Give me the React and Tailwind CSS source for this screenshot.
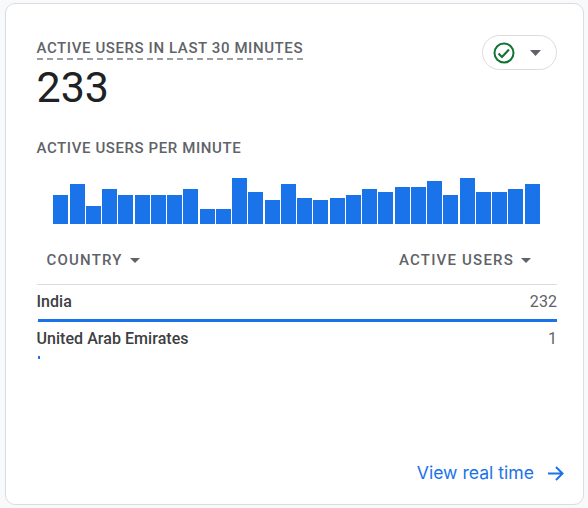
const BARS = [29, 40, 18, 35, 29, 29, 29, 29, 35, 15, 15, 46, 32, 24, 40, 26, 24, 26, 29, 35, 32, 37, 37, 43, 29, 46, 32, 32, 35, 40];

function Caret({ w = 10, h = 5 }) {
  return (
    <svg width={w} height={h} viewBox="0 0 10 5" preserveAspectRatio="none">
      <path d="M0 0h10L5 5z" fill="#5f6368" />
    </svg>
  );
}

export default function App() {
  return (
    <div className="w-[588px] h-[508px] bg-[#f8f9fa] pl-[5px] pr-[4px] pt-[3px] pb-[3px] font-['Roboto',sans-serif]">
      <div className="w-full h-full flex flex-col bg-white border border-[#dadce0] rounded-[10px] pl-[30.5px] pr-[26px] pt-[34px]">
        <div className="flex justify-between items-start">
          <div className="flex flex-col items-start">
            <div className="text-[15px] leading-[20px] font-medium tracking-[0.6px] text-[#5f6368] border-b-2 border-dashed border-[#9aa0a6]">
              ACTIVE USERS IN LAST 30 MINUTES
            </div>
            <div className="text-[43px] leading-[52px] text-[#202124] mt-[1px]">233</div>
          </div>
          <div className="flex items-center w-[75px] h-[35px] border border-[#dadce0] rounded-full pl-[10px] gap-[15px] mt-[-3px]">
            <svg width="22" height="22" viewBox="0 0 22 22">
              <circle cx="11" cy="11" r="9.5" fill="none" stroke="#137333" strokeWidth="2" />
              <path d="M5.5 11.5l3.5 3.5 7-7.5" fill="none" stroke="#137333" strokeWidth="2.2" />
            </svg>
            <Caret w={11} h={6} />
          </div>
        </div>

        <div className="text-[15px] leading-[20px] font-medium tracking-[0.6px] text-[#5f6368] mt-[25px]">
          ACTIVE USERS PER MINUTE
        </div>

        <div className="flex items-end gap-[1.25px] h-[46px] mt-[20px] ml-[16.75px]">
          {BARS.map((h, i) => (
            <div key={i} className="w-[15px] shrink-0 bg-[#1a73e8]" style={{ height: h }} />
          ))}
        </div>

        <div className="flex justify-between items-start h-[61px] pt-[26px] pl-[10px] pr-[26px] border-b border-[#dadce0] text-[15px] leading-[20px] font-medium tracking-[1.2px] text-[#5f6368]">
          <div className="flex items-center gap-[7px]">
            COUNTRY
            <Caret />
          </div>
          <div className="flex items-center gap-[7px]">
            ACTIVE USERS
            <Caret />
          </div>
        </div>

        <div className="flex justify-between items-center h-[34px] text-[16px] tracking-[0.05px] text-[#3c4043]">
          <span className="font-medium">India</span>
          <span className="text-[#5f6368]">232</span>
        </div>
        <div className="flex items-end h-[3px]">
          <div className="w-[1px] h-[1px] bg-[#dadce0]" />
          <div className="grow h-[3px] bg-[#1a73e8]" />
        </div>

        <div className="flex justify-between items-center h-[34px] text-[16px] tracking-[0.05px] text-[#3c4043]">
          <span className="font-medium">United Arab Emirates</span>
          <span className="text-[#5f6368]">1</span>
        </div>
        <div className="h-[3px] w-[2px] bg-[#1a73e8] ml-[1px]" />

        <div className="mt-auto mb-[19px] mr-[-7px] flex justify-end items-center gap-[14px] text-[#1a73e8]">
          <span className="text-[17.6px] leading-[24px] font-['Inter',sans-serif]">View real time</span>
          <svg width="16" height="15" viewBox="0 0 16 15">
            <path d="M0 7.5h14.5M8 1l6.5 6.5L8 14" fill="none" stroke="#1a73e8" strokeWidth="2" />
          </svg>
        </div>
      </div>
    </div>
  );
}
